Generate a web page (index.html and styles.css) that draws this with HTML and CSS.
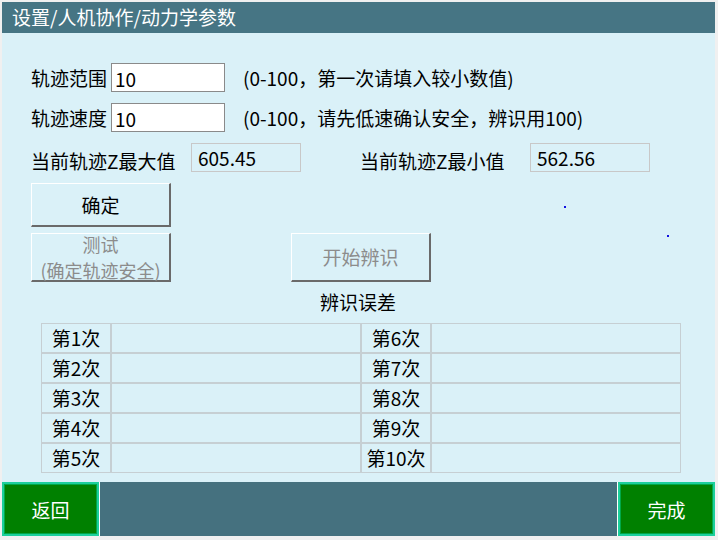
FILE: index.html
```html
<!DOCTYPE html>
<html lang="zh-CN">
<head>
<meta charset="utf-8">
<title>动力学参数</title>
<link rel="stylesheet" href="styles.css">
</head>
<body>
<div class="app">
  <div class="titlebar">设置/人机协作/动力学参数</div>
  <div class="content">
    <div class="row">
      <span class="label">轨迹范围</span>
      <span class="input">10</span>
      <span class="hint">(0-100，第一次请填入较小数值)</span>
    </div>
    <div class="row row2">
      <span class="label">轨迹速度</span>
      <span class="input">10</span>
      <span class="hint">(0-100，请先低速确认安全，辨识用100)</span>
    </div>
    <div class="row row3">
      <span class="zlabel">当前轨迹Z最大值</span>
      <span class="valbox">605.45</span>
      <span class="zlabel zmin">当前轨迹Z最小值</span>
      <span class="valbox wide">562.56</span>
    </div>
    <div class="btnrow">
      <div class="btn">确定</div>
    </div>
    <div class="btnrow btnrow2">
      <div class="btn tall disabled two"><span>测试</span><span>(确定轨迹安全)</span></div>
      <div class="btn tall disabled start">开始辨识</div>
    </div>
    <div class="caption">辨识误差</div>
    <table class="errtable">
      <tr><td class="k">第1次</td><td class="v"></td><td class="k">第6次</td><td class="v"></td></tr>
      <tr><td class="k">第2次</td><td class="v"></td><td class="k">第7次</td><td class="v"></td></tr>
      <tr><td class="k">第3次</td><td class="v"></td><td class="k">第8次</td><td class="v"></td></tr>
      <tr><td class="k">第4次</td><td class="v"></td><td class="k">第9次</td><td class="v"></td></tr>
      <tr><td class="k">第5次</td><td class="v"></td><td class="k">第10次</td><td class="v"></td></tr>
    </table>
    <span class="dot d1"></span>
    <span class="dot d2"></span>
  </div>
  <div class="footer">
    <div class="fbtn">返回</div>
    <div class="fbar"></div>
    <div class="fbtn">完成</div>
  </div>
</div>
</body>
</html>
```

FILE: styles.css
```css
html, body {
  margin: 0;
  padding: 0;
  background: #f0f0f0;
}
body {
  font-family: "Noto Sans CJK SC", "Noto Sans", sans-serif;
  font-size: 19px;
  color: #000;
}
.app {
  margin: 2px 0 0 2px;
  width: 713px;
}
.titlebar {
  height: 31px;
  line-height: 30px;
  background: #467584;
  color: #fff;
  font-size: 19px;
  padding-left: 10px;
}
.content {
  position: relative;
  height: 449px;
  background: #daf1f8;
  padding: 30px 0 0 29px;
  box-sizing: border-box;
}
.row {
  display: flex;
  align-items: center;
  height: 29px;
}
.row2 { margin-top: 11px; }
.row3 { margin-top: 11px; }
.label {
  width: 80px;
  line-height: 29px;
}
.input {
  width: 109px;
  height: 27px;
  border: 1px solid #8a8a8a;
  background: #fff;
  line-height: 29px;
  padding-left: 3px;
}
.hint {
  margin-left: 18px;
}
.zlabel {
  width: 160px;
  line-height: 29px;
  padding-top: 5px;
}
.zmin {
  margin-left: 59px;
  width: 170px;
}
.valbox {
  width: 102px;
  height: 27px;
  border: 1px solid #c8c8c8;
  padding-left: 6px;
  line-height: 27px;
}
.valbox.wide {
  width: 112px;
}
.btnrow {
  display: flex;
  margin-top: 11px;
}
.btnrow2 {
  margin-top: 6px;
  gap: 120px;
}
.btn {
  width: 137px;
  height: 41px;
  border-top: 1px solid #fff;
  border-left: 1px solid #fff;
  border-right: 2px solid #6a6a6a;
  border-bottom: 2px solid #6a6a6a;
  display: flex;
  flex-direction: column;
  align-items: center;
  justify-content: center;
  text-align: center;
  line-height: 24px;
}
.btn.tall {
  height: 46px;
}
.btn.two {
  font-size: 18px;
  line-height: 26.5px;
  white-space: nowrap;
}
.btn.two span {
  display: block;
  height: 26.5px;
}
.disabled {
  color: #8c8c8c;
}
.caption {
  width: 654px;
  text-align: center;
  height: 41px;
  line-height: 40px;
}
.errtable {
  margin-left: 10px;
  border-collapse: separate;
  border-spacing: 0;
}
.errtable td {
  border: 1px solid #c6cfd3;
  height: 28px;
  padding: 0;
  line-height: 28px;
}
.errtable td.k {
  width: 68px;
  text-align: center;
}
.errtable td.v {
  width: 248px;
}
.dot {
  position: absolute;
  width: 2px;
  height: 2px;
  background: #1010e0;
}
.d1 { left: 562px; top: 173px; }
.d2 { left: 665px; top: 202px; }
.footer {
  display: flex;
  height: 54px;
}
.fbtn {
  width: 93px;
  height: 50px;
  background: #008000;
  border: 2px solid #1ccf9c;
  box-shadow: inset 0 0 0 1px #00a848;
  color: #fff;
  display: flex;
  align-items: center;
  justify-content: center;
}
.fbar {
  flex: 1;
  background: #45717f;
  border-left: 1px solid #fff;
  border-right: 1px solid #fff;
}
```
